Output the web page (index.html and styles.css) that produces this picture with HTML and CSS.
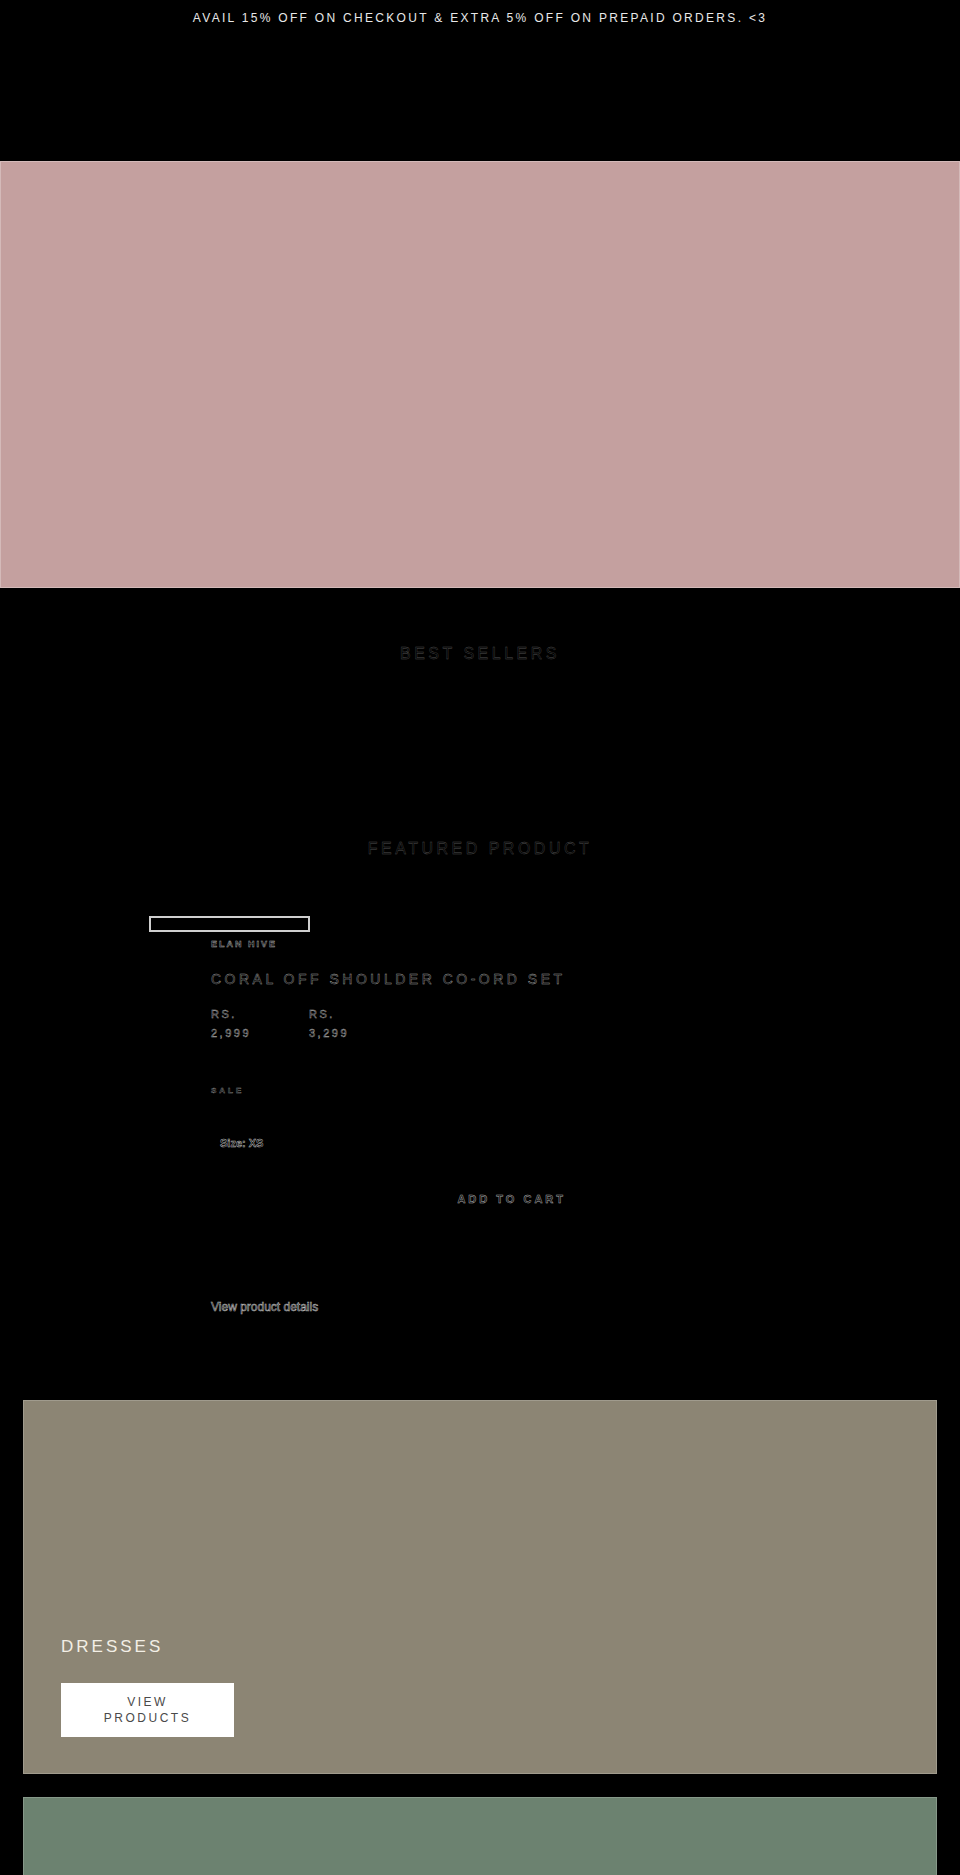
FILE: index.html
```html
<!DOCTYPE html>
<html lang="en">
<head>
<meta charset="utf-8">
<title>Store</title>
<link rel="stylesheet" href="styles.css">
</head>
<body>
<div class="announce">AVAIL 15% OFF ON CHECKOUT &amp; EXTRA 5% OFF ON PREPAID ORDERS. &lt;3</div>
<header class="header"></header>
<section class="hero"></section>

<section class="best">
  <h2 class="sec-title">BEST SELLERS</h2>
</section>

<section class="featured">
  <h2 class="sec-title">FEATURED PRODUCT</h2>
  <div class="media-box"></div>
  <div class="info">
    <div class="vendor">ELAN HIVE</div>
    <h3 class="ptitle">CORAL OFF SHOULDER CO-ORD SET</h3>
    <div class="prices">
      <span class="price">RS. 2,999</span>
      <span class="price">RS. 3,299</span>
    </div>
    <div class="badge">SALE</div>
    <div class="size">Size: XS</div>
    <div class="cart-row"><span class="cart">ADD TO CART</span></div>
    <a class="details">View product details</a>
  </div>
</section>

<section class="collections">
  <div class="card card-tan">
    <div class="card-title">DRESSES</div>
    <a class="card-btn">VIEW PRODUCTS</a>
  </div>
  <div class="card card-green"></div>
</section>
</body>
</html>
```
FILE: styles.css
```css
* { box-sizing: border-box; }
html, body { margin: 0; padding: 0; }
body {
  background: #000;
  font-family: "Liberation Sans", Arial, sans-serif;
  color: #ddd;
}
.announce {
  height: 36px;
  line-height: 36px;
  text-align: center;
  font-size: 12px;
  letter-spacing: 2.3px;
  color: #e8e8e8;
}
.header { height: 125px; }
.hero {
  height: 427px;
  background: #c4a09f;
  border: 1px solid #d4bab9;
}
.sec-title {
  margin: 0;
  text-align: center;
  font-size: 16px;
  font-weight: 400;
  line-height: 20px;
  letter-spacing: 3.5px;
  color: #000;
  -webkit-text-stroke: 0.35px #505050;
}
.best { padding-top: 56px; }
.featured { padding-top: 175px; }
.media-box {
  margin: 57px 0 0 149px;
  width: 161px;
  height: 16px;
  border: 2px solid #cfcfcf;
}
.info { padding-left: 211px; }
.vendor {
  margin-top: 6px;
  font-size: 9px;
  line-height: 12px;
  letter-spacing: 2px;
  font-weight: 700;
  color: #000;
  -webkit-text-stroke: 0.45px #aaa;
}
.ptitle {
  margin: 19px 0 0;
  font-size: 14px;
  font-weight: 400;
  line-height: 20px;
  letter-spacing: 3.5px;
  color: #000;
  -webkit-text-stroke: 0.4px #a0a0a0;
}
.prices {
  display: flex;
  gap: 38px;
  margin-top: 16px;
}
.price {
  width: 60px;
  font-size: 11px;
  line-height: 19px;
  letter-spacing: 2.5px;
  color: #000;
  -webkit-text-stroke: 0.45px #a8a8a8;
}
.badge {
  margin-top: 42px;
  font-size: 8px;
  line-height: 12px;
  letter-spacing: 3px;
  font-weight: 700;
  color: #000;
  -webkit-text-stroke: 0.4px #888;
}
.size {
  margin-top: 39px;
  padding-left: 9px;
  font-size: 11px;
  line-height: 14px;
  font-weight: 700;
  color: #000;
  -webkit-text-stroke: 0.5px #bbb;
}
.cart-row {
  margin-top: 41px;
  width: 352px;
  text-align: right;
  line-height: 14px;
}
.cart {
  font-size: 11px;
  letter-spacing: 3px;
  margin-right: -3px;
  font-weight: 700;
  color: #000;
  -webkit-text-stroke: 0.5px #aaa;
}
.details {
  display: block;
  margin-top: 94px;
  font-size: 12px;
  line-height: 14px;
  font-weight: 400;
  color: #000;
  -webkit-text-stroke: 0.55px #bbb;
}
.collections {
  margin-top: 86px;
  padding: 0 23px;
  display: flex;
  flex-direction: column;
  gap: 23px;
}
.card {
  height: 374px;
  border: 1px solid rgba(255, 255, 255, 0.18);
  display: flex;
  flex-direction: column;
  justify-content: flex-end;
  align-items: flex-start;
  padding: 0 0 36px 37px;
}
.card-tan { background: #8c8574; }
.card-green { background: #6c8270; }
.card-title {
  font-size: 17px;
  line-height: 24px;
  letter-spacing: 3px;
  color: #f3efe6;
}
.card-btn {
  margin-top: 24px;
  width: 173px;
  height: 54px;
  padding: 0 30px;
  background: #fff;
  display: flex;
  align-items: center;
  justify-content: center;
  text-align: center;
  font-size: 12px;
  line-height: 16px;
  letter-spacing: 2.5px;
  color: #4a4a4a;
}
```
